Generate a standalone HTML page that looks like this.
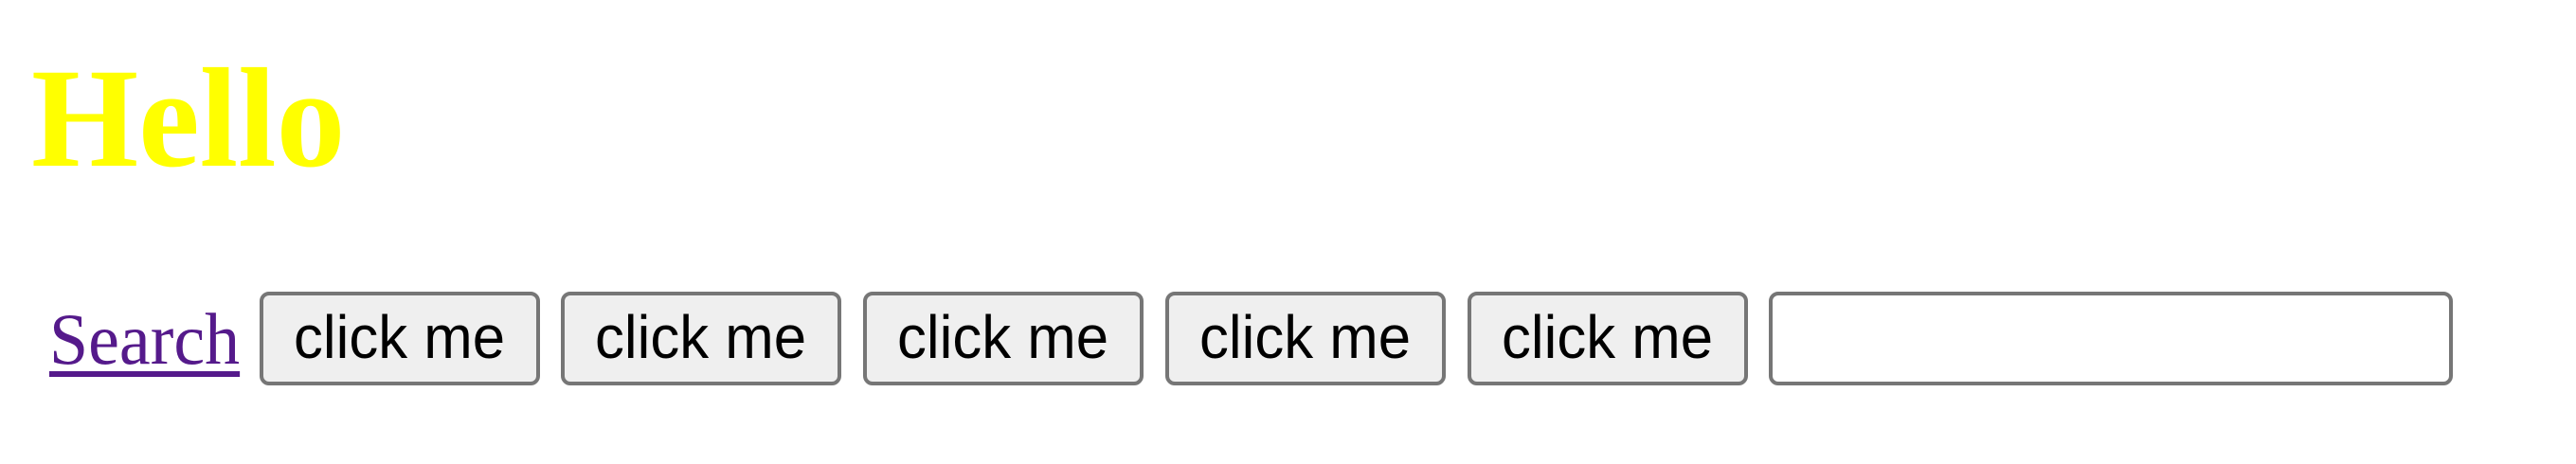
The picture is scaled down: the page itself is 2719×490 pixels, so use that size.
<!DOCTYPE html>
<html><head><style>
html,body{margin:0;padding:0;width:2719px;height:490px;background:#fff;overflow:hidden;position:relative}
.h{position:absolute;left:33px;top:50px;font:bold 150px/150px "Liberation Serif",serif;color:#ff0;margin:0;white-space:nowrap;transform:scaleX(0.97);transform-origin:0 0}
.s{position:absolute;left:52px;top:308px;font:77px/100px "Liberation Serif",serif;color:#551a8b;text-decoration:underline;text-decoration-thickness:6px;text-underline-offset:8px;transform:scaleX(0.96);transform-origin:0 0}
.b{position:absolute;top:308px;width:296px;height:99px;box-sizing:border-box;border:4px solid #767676;border-radius:10px;background:#efefef;color:#000;text-align:center}
.b span{display:inline-block;font:64px/89px "Liberation Sans",sans-serif;transform:scaleX(0.965)}
.i{position:absolute;top:308px;left:1867px;width:722px;height:99px;box-sizing:border-box;border:4px solid #767676;border-radius:10px;background:#fff}
</style></head><body>
<h1 class="h">Hello</h1>
<a class="s">Search</a>
<div class="b" style="left:274px"><span>click me</span></div>
<div class="b" style="left:592px"><span>click me</span></div>
<div class="b" style="left:911px"><span>click me</span></div>
<div class="b" style="left:1230px"><span>click me</span></div>
<div class="b" style="left:1549px"><span>click me</span></div>
<div class="i"></div>
</body></html>
